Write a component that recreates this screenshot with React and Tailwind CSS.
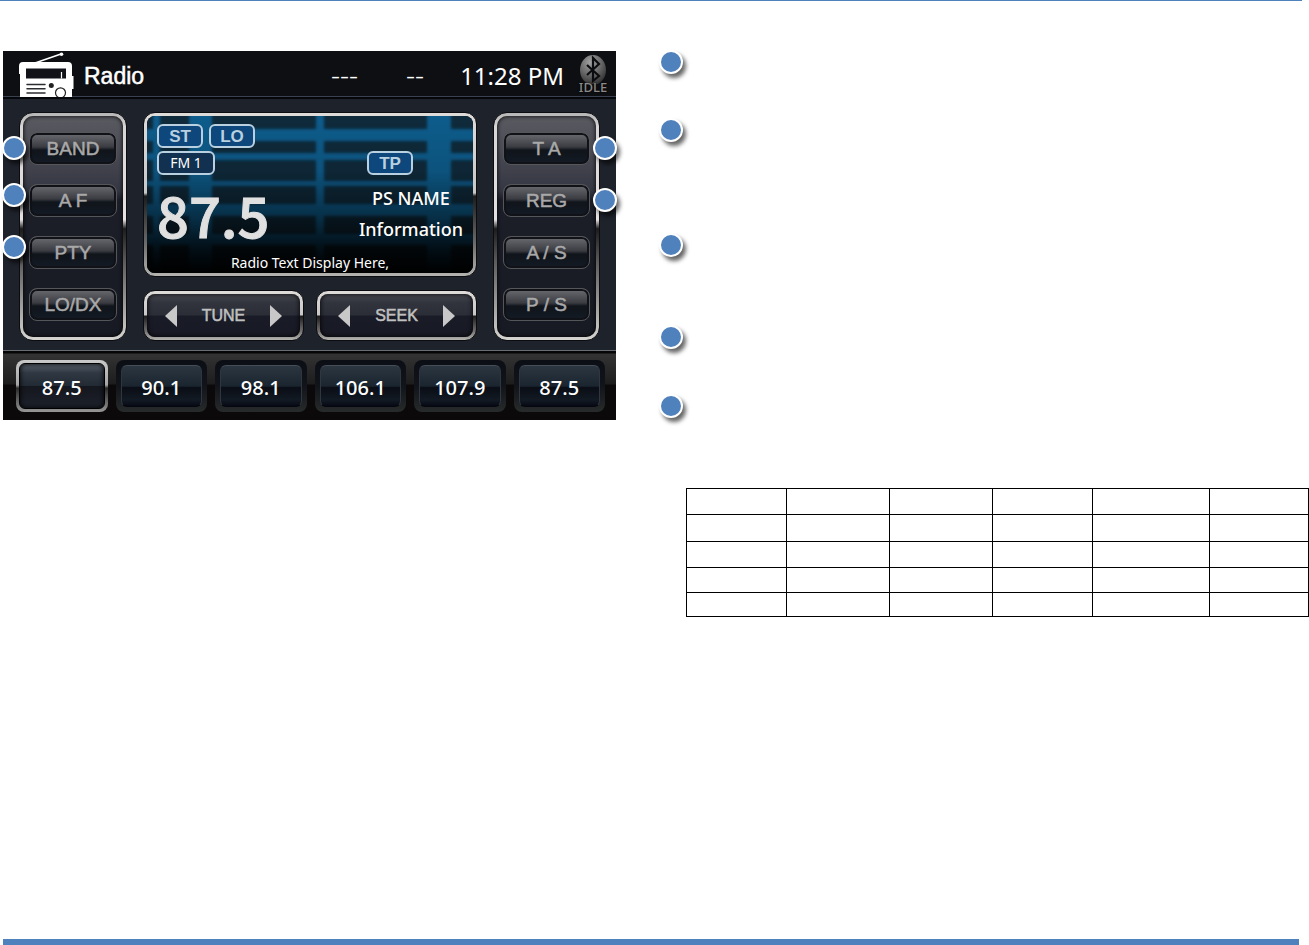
import clsx from 'clsx'

const PRESETS = ['87.5', '90.1', '98.1', '106.1', '107.9', '87.5']

const LEFT_KEYS = [
  { label: 'BAND', marker: 'top-1 -left-[27px]' },
  { label: 'A F', marker: '-top-px -left-[27px]' },
  { label: 'PTY', marker: '-top-px -left-[27px]' },
  { label: 'LO/DX' },
]

const RIGHT_KEYS = [
  { label: 'T A', marker: 'top-1 -right-[27px]' },
  { label: 'REG', marker: 'top-1 -right-[27px]' },
  { label: 'A / S' },
  { label: 'P / S' },
]

const NOTE_HEIGHTS = ['min-h-[68px]', 'min-h-[115px]', 'min-h-[92px]', 'min-h-[69px]', 'min-h-[94px]']
const ROW_HEIGHTS = ['h-[26px]', 'h-[27px]', 'h-[26px]', 'h-[25px]', 'h-[24px]']
const COL_WIDTHS = ['w-[100px]', 'w-[103px]', 'w-[103px]', 'w-[100px]', 'w-[117px]', 'w-[99px]']

function Marker({ className }) {
  return (
    <span
      className={clsx(
        'block size-6 rounded-full border-2 border-white bg-[#4f81bd] shadow-[3px_4px_4px_rgba(0,0,0,0.6)]',
        className
      )}
    />
  )
}

// Silver bezel: bright upper half, dark break in the middle, grey again at the bottom
function Bezel({ className, innerClass, children }) {
  return (
    <div
      className={clsx(
        'flex rounded-xl border border-[#0b0c10] bg-[linear-gradient(#dedbd9,#c9c7c6_49%,#1c1c1c_51%,#6d6b69_80%,#b5b4b0)] p-[3px]',
        className
      )}
    >
      <div className={clsx('min-w-0 flex-1 overflow-hidden rounded-lg', innerClass)}>{children}</div>
    </div>
  )
}

function RadioIcon() {
  return (
    <svg viewBox="0 0 55 45" className="h-[45px] w-[55px] shrink-0" aria-hidden="true">
      <path d="M16 11 42 2" stroke="#fff" strokeWidth="1.6" />
      <circle cx="42.5" cy="2.2" r="1.8" fill="#fff" />
      <path d="M4 10h45a4 4 0 0 1 4 4v10h1.500v13H53v8H1V22H0v-8a4 4 0 0 1 4-4Z" fill="#fff" />
      <path d="M7 16.500h40v10H7z" fill="#111318" />
      <path d="M42.500 20v6.500" stroke="#fff" strokeWidth="1.200" />
      <path d="M8 32.500h18M8 36.700h18M8 41h18" stroke="#2a2c30" strokeWidth="1.500" strokeLinecap="round" />
      <circle cx="32.300" cy="33.500" r="2.500" fill="#222" />
      <circle cx="41.500" cy="40.800" r="5" fill="#fff" stroke="#222" strokeWidth="1.200" />
    </svg>
  )
}

function BluetoothIcon() {
  return (
    <svg viewBox="0 0 30 30" className="size-[30px]" aria-hidden="true">
      <defs>
        <radialGradient id="bt" cx="0.4" cy="0.25" r="0.8">
          <stop offset="0" stopColor="#a2a2a2" />
          <stop offset="0.5" stopColor="#6a6a6a" />
          <stop offset="1" stopColor="#2c2c2c" />
        </radialGradient>
      </defs>
      <ellipse cx="15" cy="16" rx="13" ry="15" fill="url(#bt)" />
      <path d="M9 11l12 11-6 5V4l6 6L9 21" fill="none" stroke="#0b0c0f" strokeWidth="2.2" />
    </svg>
  )
}

function Header() {
  return (
    <header className="flex h-[48px] items-center border-b-2 border-b-[#05070b] bg-[#0e0f13] pr-2 pl-4 text-white shadow-[inset_0_-1px_#3a4252]">
      <RadioIcon />
      <h1 className="ml-[10px] pt-[5px] font-['Liberation_Sans',sans-serif] text-[23px] leading-none [-webkit-text-stroke:0.5px_#fff]">
        Radio
      </h1>
      <div className="ml-auto flex items-center">
        <span className="mr-12 text-[28px] leading-none font-light">---</span>
        <span className="mr-9 text-[28px] leading-none font-light">--</span>
        <time className="pt-1 text-[24px] leading-none whitespace-nowrap">11:28 PM</time>
        <div className="ml-[14px] flex w-[30px] flex-col items-center">
          <BluetoothIcon />
          <span className="-mt-1 text-[13px] leading-[14px] font-medium text-[#8d8a87] [text-shadow:0_0_2px_#000]">
            IDLE
          </span>
        </div>
      </div>
    </header>
  )
}

function KeyPanel({ keys }) {
  return (
    <div className="flex rounded-[14px] border border-[#0b0c10] bg-[linear-gradient(#b5b5b5,#d8d6d5_6%,#e6e0e0_47%,#1c1c1c_51%,#5b5a59_65%,#aaa9a6_88%,#d5d4d0)] p-[3px]">
      <div className="flex flex-1 flex-col gap-[19px] rounded-[10px] bg-[linear-gradient(#5a5b61,#4b4c55_15%,#343641_34%,#1c1e28_38%,#181a23)] px-[6px] py-4 shadow-[inset_0_0_4px_#000]">
        {keys.map(({ label, marker }) => (
          <div key={label} className="relative flex h-[33px]">
            <button
              type="button"
              className="flex-1 rounded-lg border border-[#55565a] bg-[linear-gradient(#6c6d71,#3a3c42_45%,#10141b_55%,#141b25)] text-center font-['Liberation_Sans',sans-serif] text-[19px] leading-none whitespace-nowrap text-[#a9a9a9] shadow-[inset_0_0_0_2px_#101218] [-webkit-text-stroke:0.5px_#a9a9a9]"
            >
              {label}
            </button>
            {marker && <Marker className={clsx('absolute', marker)} />}
          </div>
        ))}
      </div>
    </div>
  )
}

function Flag({ className, children }) {
  return (
    <span
      className={clsx(
        'flex h-6 items-center justify-center rounded-md border-2 border-[#b9d0e0] leading-none',
        className
      )}
    >
      {children}
    </span>
  )
}

function DisplayBackdrop() {
  return (
    <svg viewBox="0 0 326 157" preserveAspectRatio="none" className="absolute inset-0 size-full" aria-hidden="true">
      <defs>
        <linearGradient id="fade" x1="0" y1="0" x2="0" y2="1">
          <stop offset="0" stopColor="#000" stopOpacity="0" />
          <stop offset="0.35" stopColor="#000" stopOpacity="0.1" />
          <stop offset="0.65" stopColor="#000" stopOpacity="0.5" />
          <stop offset="0.85" stopColor="#000" stopOpacity="0.85" />
          <stop offset="1" stopColor="#000" />
        </linearGradient>
        <filter id="soft">
          <feGaussianBlur stdDeviation="1.500" />
        </filter>
      </defs>
      <rect width="326" height="157" fill="#0f2a3b" />
      <g fill="#075b8b" filter="url(#soft)">
        <rect x="6" y="-5" width="7" height="167" />
        <rect x="42" y="-5" width="23" height="167" />
        <rect x="169" y="-5" width="8" height="167" />
        <rect x="280" y="-5" width="24" height="167" />
        <rect x="-5" y="13" width="336" height="12" />
        <rect x="-5" y="37" width="336" height="7" />
        <rect x="-5" y="65" width="336" height="5" />
        <rect x="-5" y="88" width="336" height="12" />
        <rect x="-5" y="118" width="336" height="11" />
      </g>
      <rect width="326" height="157" fill="url(#fade)" />
    </svg>
  )
}

function Display() {
  return (
    <Bezel className="h-[165px]" innerClass="relative bg-black">
      <DisplayBackdrop />
      <div className="relative flex h-full flex-col px-[10px] pt-2 text-white">
        <div className="flex gap-[6px] font-['Liberation_Sans',sans-serif] text-[17px] font-bold text-[#b9d0e0]">
          <Flag className="w-[46px] bg-[#0d477b]">ST</Flag>
          <Flag className="w-[46px] bg-[#0d477b]">LO</Flag>
        </div>
        <div className="mt-[3px] flex justify-between pr-[50px]">
          <Flag className="w-[58px] bg-[#12304f] text-[14px]">FM 1</Flag>
          <Flag className="w-[46px] bg-[#0d477b] font-['Liberation_Sans',sans-serif] text-[17px] font-bold text-[#b9d0e0]">
            TP
          </Flag>
        </div>
        <div className="flex h-[78px] items-center justify-between">
          <output className="font-['Noto_Sans_CJK_KR',sans-serif] text-[56px] leading-[76px] font-medium text-[#e0e0e0] [-webkit-text-stroke:1px_#e0e0e0]">
            87.5
          </output>
          <div className="text-center text-[18px] leading-[31px] font-medium">
            <p>PS NAME</p>
            <p>Information</p>
          </div>
        </div>
        <p className="text-center text-[14px] leading-5">Radio Text Display Here,</p>
      </div>
    </Bezel>
  )
}

function Stepper({ label }) {
  return (
    <Bezel
      className="h-[51px] flex-1"
      innerClass="flex items-center justify-between bg-[linear-gradient(#4a4b53,#31333d_20%,#2b2d37_48%,#191b26_52%,#181924)] px-[18px] shadow-[inset_0_0_5px_#000]"
    >
      <button type="button" aria-label={`${label} down`}>
        <svg viewBox="0 0 12 22" className="h-[22px] w-3" fill="#c8c8c8">
          <path d="M12 0v22L0 11z" />
        </svg>
      </button>
      <span className="font-['Liberation_Sans',sans-serif] text-[16px] leading-none text-[#c0c0c0] [-webkit-text-stroke:0.5px_#c0c0c0]">
        {label}
      </span>
      <button type="button" aria-label={`${label} up`}>
        <svg viewBox="0 0 12 22" className="h-[22px] w-3" fill="#c8c8c8">
          <path d="M0 0v22l12-11z" />
        </svg>
      </button>
    </Bezel>
  )
}

function Preset({ value, active }) {
  return (
    <button
      type="button"
      className={clsx(
        'flex rounded-lg',
        active
          ? 'bg-[linear-gradient(#c9c9c9,#a5a5a5_48%,#2a2a2a_54%,#979797)] p-[3px]'
          : 'bg-[linear-gradient(#0b0e15,#111419_50%,#272b2b)] p-[5px]'
      )}
    >
      <span
        className={clsx(
          'flex h-full flex-1 items-center justify-center rounded-md border pt-1 text-[20px] leading-none font-medium text-white',
          active
            ? 'border-black bg-[linear-gradient(#59616d,#303843_20%,#222a34_49%,#15171e_51%,#1c212b)] shadow-[inset_0_0_5px_#000]'
            : 'border-t-[#454d57] border-r-[#30353f] border-b-[#05060f] border-l-[#30353f] bg-[linear-gradient(#2b3640,#1b2530_50%,#0a0d15_54%,#121a23_85%,#070914)]'
        )}
      >
        {value}
      </span>
    </button>
  )
}

function RadioScreen() {
  return (
    <section className="bg-[#1e222b] font-['Noto_Sans',sans-serif]">
      <Header />
      <div className="grid grid-cols-[108fr_334fr_107fr] gap-4 px-4 pt-[13px] pb-[9px]">
        <KeyPanel keys={LEFT_KEYS} />
        <div className="flex min-w-0 flex-col gap-[13px]">
          <Display />
          <div className="flex gap-3">
            <Stepper label="TUNE" />
            <Stepper label="SEEK" />
          </div>
        </div>
        <KeyPanel keys={RIGHT_KEYS} />
      </div>
      <nav className="grid h-[70px] grid-cols-6 gap-2 border-t border-[#6a6e75] bg-[linear-gradient(#060607_2px,#333_3px,#1e1d1d_33px,#0b0909_34px)] pt-[9px] pr-[11px] pb-2 pl-[13px]">
        {PRESETS.map((value, i) => (
          <Preset key={i} value={value} active={i === 0} />
        ))}
      </nav>
    </section>
  )
}

function BandTable() {
  return (
    <table className="w-full table-fixed border-collapse border border-black">
      <tbody>
        {ROW_HEIGHTS.map((height, r) => (
          <tr key={r} className={height}>
            {COL_WIDTHS.map((width, c) => (
              <td key={c} className={clsx('border border-black p-0', width)} />
            ))}
          </tr>
        ))}
      </tbody>
    </table>
  )
}

export default function App() {
  return (
    <div className="flex min-h-screen flex-col bg-white">
      <div className="mr-[7px] h-px bg-[#4f81bd]" />
      <main className="grid grid-cols-[616fr_693fr] items-start pt-[50px]">
        <div className="pl-[3px]">
          <RadioScreen />
        </div>
        <div>
          <ol className="-mt-px pl-[43px]">
            {NOTE_HEIGHTS.map((height, i) => (
              <li key={i} className={height}>
                <Marker />
              </li>
            ))}
          </ol>
          <div className="pl-[70px]">
            <BandTable />
          </div>
        </div>
      </main>
      <footer className="mt-auto mr-[10px] ml-[3px] h-[6px] bg-[#4f81bd]" />
    </div>
  )
}
